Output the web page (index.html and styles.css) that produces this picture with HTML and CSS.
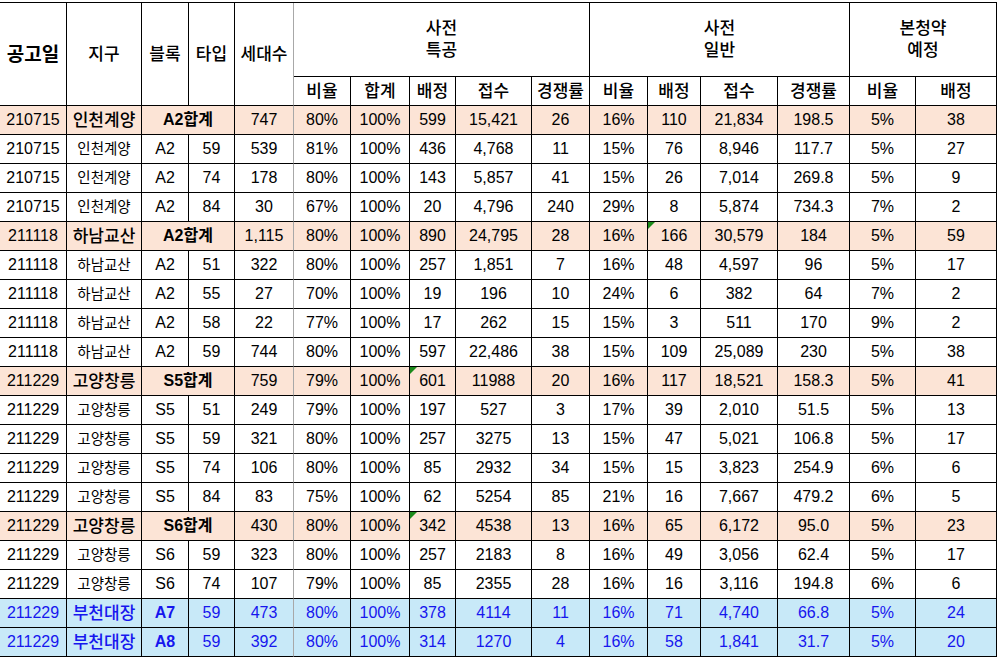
FILE: index.html
```html
<!DOCTYPE html>
<html lang="ko">
<head>
<meta charset="utf-8">
<title>사전청약 경쟁률</title>
<link rel="stylesheet" href="styles.css">
</head>
<body>
<div class="sheet">
  <div class="c h big r2">공고일</div>
  <div class="c h r2">지구</div>
  <div class="c h r2">블록</div>
  <div class="c h r2">타입</div>
  <div class="c h r2 hh">세대수</div>
  <div class="c h grp s5">사전<br>특공</div>
  <div class="c h grp s4">사전<br>일반</div>
  <div class="c h grp s2">본청약<br>예정</div>
  <div class="c h">비율</div>
  <div class="c h">합계</div>
  <div class="c h">배정</div>
  <div class="c h">접수</div>
  <div class="c h">경쟁률</div>
  <div class="c h">비율</div>
  <div class="c h">배정</div>
  <div class="c h">접수</div>
  <div class="c h">경쟁률</div>
  <div class="c h">비율</div>
  <div class="c h">배정</div>

  <div class="row sum"><div class="c">210715</div><div class="c d">인천계양</div><div class="c b s2">A2합계</div><div class="c hh">747</div><div class="c">80%</div><div class="c">100%</div><div class="c">599</div><div class="c">15,421</div><div class="c">26</div><div class="c">16%</div><div class="c">110</div><div class="c">21,834</div><div class="c">198.5</div><div class="c">5%</div><div class="c">38</div></div>
  <div class="row"><div class="c">210715</div><div class="c d">인천계양</div><div class="c b">A2</div><div class="c">59</div><div class="c hh">539</div><div class="c">81%</div><div class="c">100%</div><div class="c">436</div><div class="c">4,768</div><div class="c">11</div><div class="c">15%</div><div class="c">76</div><div class="c">8,946</div><div class="c">117.7</div><div class="c">5%</div><div class="c">27</div></div>
  <div class="row"><div class="c">210715</div><div class="c d">인천계양</div><div class="c b">A2</div><div class="c">74</div><div class="c hh">178</div><div class="c">80%</div><div class="c">100%</div><div class="c">143</div><div class="c">5,857</div><div class="c">41</div><div class="c">15%</div><div class="c">26</div><div class="c">7,014</div><div class="c">269.8</div><div class="c">5%</div><div class="c">9</div></div>
  <div class="row"><div class="c">210715</div><div class="c d">인천계양</div><div class="c b">A2</div><div class="c">84</div><div class="c hh">30</div><div class="c">67%</div><div class="c">100%</div><div class="c">20</div><div class="c">4,796</div><div class="c">240</div><div class="c">29%</div><div class="c">8</div><div class="c">5,874</div><div class="c">734.3</div><div class="c">7%</div><div class="c">2</div></div>

  <div class="row sum"><div class="c">211118</div><div class="c d">하남교산</div><div class="c b s2">A2합계</div><div class="c hh">1,115</div><div class="c">80%</div><div class="c">100%</div><div class="c">890</div><div class="c">24,795</div><div class="c">28</div><div class="c">16%</div><div class="c tri">166</div><div class="c">30,579</div><div class="c">184</div><div class="c">5%</div><div class="c">59</div></div>
  <div class="row"><div class="c">211118</div><div class="c d">하남교산</div><div class="c b">A2</div><div class="c">51</div><div class="c hh">322</div><div class="c">80%</div><div class="c">100%</div><div class="c">257</div><div class="c">1,851</div><div class="c">7</div><div class="c">16%</div><div class="c">48</div><div class="c">4,597</div><div class="c">96</div><div class="c">5%</div><div class="c">17</div></div>
  <div class="row"><div class="c">211118</div><div class="c d">하남교산</div><div class="c b">A2</div><div class="c">55</div><div class="c hh">27</div><div class="c">70%</div><div class="c">100%</div><div class="c">19</div><div class="c">196</div><div class="c">10</div><div class="c">24%</div><div class="c">6</div><div class="c">382</div><div class="c">64</div><div class="c">7%</div><div class="c">2</div></div>
  <div class="row"><div class="c">211118</div><div class="c d">하남교산</div><div class="c b">A2</div><div class="c">58</div><div class="c hh">22</div><div class="c">77%</div><div class="c">100%</div><div class="c">17</div><div class="c">262</div><div class="c">15</div><div class="c">15%</div><div class="c">3</div><div class="c">511</div><div class="c">170</div><div class="c">9%</div><div class="c">2</div></div>
  <div class="row"><div class="c">211118</div><div class="c d">하남교산</div><div class="c b">A2</div><div class="c">59</div><div class="c hh">744</div><div class="c">80%</div><div class="c">100%</div><div class="c">597</div><div class="c">22,486</div><div class="c">38</div><div class="c">15%</div><div class="c">109</div><div class="c">25,089</div><div class="c">230</div><div class="c">5%</div><div class="c">38</div></div>

  <div class="row sum"><div class="c">211229</div><div class="c d">고양창릉</div><div class="c b s2">S5합계</div><div class="c hh">759</div><div class="c">79%</div><div class="c">100%</div><div class="c tri">601</div><div class="c">11988</div><div class="c">20</div><div class="c">16%</div><div class="c">117</div><div class="c">18,521</div><div class="c">158.3</div><div class="c">5%</div><div class="c">41</div></div>
  <div class="row"><div class="c">211229</div><div class="c d">고양창릉</div><div class="c b">S5</div><div class="c">51</div><div class="c hh">249</div><div class="c">79%</div><div class="c">100%</div><div class="c">197</div><div class="c">527</div><div class="c">3</div><div class="c">17%</div><div class="c">39</div><div class="c">2,010</div><div class="c">51.5</div><div class="c">5%</div><div class="c">13</div></div>
  <div class="row"><div class="c">211229</div><div class="c d">고양창릉</div><div class="c b">S5</div><div class="c">59</div><div class="c hh">321</div><div class="c">80%</div><div class="c">100%</div><div class="c">257</div><div class="c">3275</div><div class="c">13</div><div class="c">15%</div><div class="c">47</div><div class="c">5,021</div><div class="c">106.8</div><div class="c">5%</div><div class="c">17</div></div>
  <div class="row"><div class="c">211229</div><div class="c d">고양창릉</div><div class="c b">S5</div><div class="c">74</div><div class="c hh">106</div><div class="c">80%</div><div class="c">100%</div><div class="c">85</div><div class="c">2932</div><div class="c">34</div><div class="c">15%</div><div class="c">15</div><div class="c">3,823</div><div class="c">254.9</div><div class="c">6%</div><div class="c">6</div></div>
  <div class="row"><div class="c">211229</div><div class="c d">고양창릉</div><div class="c b">S5</div><div class="c">84</div><div class="c hh">83</div><div class="c">75%</div><div class="c">100%</div><div class="c">62</div><div class="c">5254</div><div class="c">85</div><div class="c">21%</div><div class="c">16</div><div class="c">7,667</div><div class="c">479.2</div><div class="c">6%</div><div class="c">5</div></div>

  <div class="row sum"><div class="c">211229</div><div class="c d">고양창릉</div><div class="c b s2">S6합계</div><div class="c hh">430</div><div class="c">80%</div><div class="c">100%</div><div class="c tri">342</div><div class="c">4538</div><div class="c">13</div><div class="c">16%</div><div class="c">65</div><div class="c">6,172</div><div class="c">95.0</div><div class="c">5%</div><div class="c">23</div></div>
  <div class="row"><div class="c">211229</div><div class="c d">고양창릉</div><div class="c b">S6</div><div class="c">59</div><div class="c hh">323</div><div class="c">80%</div><div class="c">100%</div><div class="c">257</div><div class="c">2183</div><div class="c">8</div><div class="c">16%</div><div class="c">49</div><div class="c">3,056</div><div class="c">62.4</div><div class="c">5%</div><div class="c">17</div></div>
  <div class="row"><div class="c">211229</div><div class="c d">고양창릉</div><div class="c b">S6</div><div class="c">74</div><div class="c hh">107</div><div class="c">79%</div><div class="c">100%</div><div class="c">85</div><div class="c">2355</div><div class="c">28</div><div class="c">16%</div><div class="c">16</div><div class="c">3,116</div><div class="c">194.8</div><div class="c">6%</div><div class="c">6</div></div>

  <div class="row new"><div class="c">211229</div><div class="c d">부천대장</div><div class="c b">A7</div><div class="c">59</div><div class="c hh">473</div><div class="c">80%</div><div class="c">100%</div><div class="c">378</div><div class="c">4114</div><div class="c">11</div><div class="c">16%</div><div class="c">71</div><div class="c">4,740</div><div class="c">66.8</div><div class="c">5%</div><div class="c">24</div></div>
  <div class="row new"><div class="c">211229</div><div class="c d">부천대장</div><div class="c b">A8</div><div class="c">59</div><div class="c hh">392</div><div class="c">80%</div><div class="c">100%</div><div class="c">314</div><div class="c">1270</div><div class="c">4</div><div class="c">16%</div><div class="c">58</div><div class="c">1,841</div><div class="c">31.7</div><div class="c">5%</div><div class="c">20</div></div>
</div>
</body>
</html>
```

FILE: styles.css
```css
html, body {
  margin: 0;
  padding: 0;
  background: #ffffff;
}

body {
  font-family: "Liberation Sans", "Noto Sans CJK KR", sans-serif;
  color: #000;
}

.sheet {
  margin-top: 2px;
  display: grid;
  grid-template-columns: 67px 75px 47px 46px 59px 57px 59px 46px 76px 58px 58px 53px 77px 72px 66px 81px;
  grid-template-rows: 74px 29px;
  grid-auto-rows: 29px;
  width: 997px;
  border-top: 1px solid #000;
}

.row {
  display: contents;
}

.c {
  box-sizing: border-box;
  border-right: 1px solid #000;
  border-bottom: 1px solid #000;
  display: flex;
  align-items: center;
  justify-content: center;
  text-align: center;
  font-size: 16px;
  line-height: 1;
  white-space: nowrap;
  position: relative;
}

.c.hh {
  border-right-color: #a8a8a8;
}

.h {
  font-weight: 500;
  font-size: 17px;
}

.h.big {
  font-size: 19px;
  font-weight: 600;
}

.r2 {
  grid-row: span 2;
}

.grp {
  line-height: 22px;
  padding-top: 1px;
}

.s5 { grid-column: span 5; }
.s4 { grid-column: span 4; }
.s2 { grid-column: span 2; }

.d {
  font-size: 14.5px;
}

.sum > .c {
  background: #fce4d6;
}

.sum > .d,
.new > .d {
  font-size: 17px;
  font-weight: 500;
}

.sum > .b,
.new > .b {
  font-weight: 700;
}

.new > .c {
  background: #c8e9f8;
  color: #1616ee;
}

.tri::before {
  content: "";
  position: absolute;
  left: 0;
  top: 0;
  width: 0;
  height: 0;
  border-top: 7px solid #1b8a1b;
  border-right: 7px solid transparent;
}
```
